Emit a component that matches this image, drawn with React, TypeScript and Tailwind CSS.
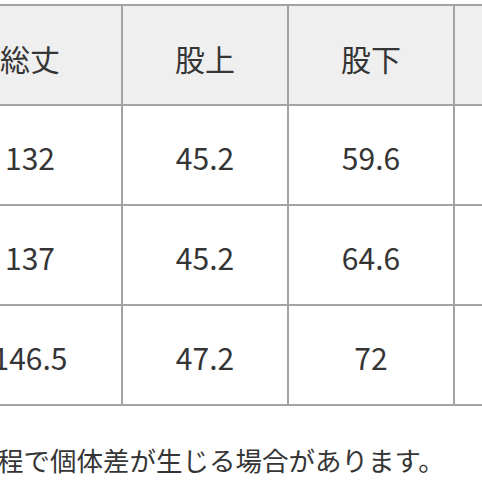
const header = ["総丈", "股上", "股下", ""];
const rows = [
  ["132", "45.2", "59.6", ""],
  ["137", "45.2", "64.6", ""],
  ["146.5", "47.2", "72", ""],
];

const colWidths = ["w-[184px]", "w-[166px]", "w-[166px]", "w-[166px]"];

function Cell({ text, i, head }: { text: string; i: number; head?: boolean }) {
  return (
    <div
      className={`${colWidths[i]} box-border flex h-[100px] shrink-0 items-center justify-center border-r-2 border-b-2 border-[#a3a3a3] ${
        head ? "bg-[#efefef] pt-[5px]" : "bg-white pt-[4px]"
      }`}
    >
      {text}
    </div>
  );
}

export default function App() {
  return (
    <div
      className="h-[482px] w-[482px] overflow-hidden bg-white text-[#353535]"
      style={{ fontFamily: '"Noto Sans CJK JP", "Noto Sans", sans-serif' }}
    >
      <div className="ml-[-61px] mt-[4px] w-max border-t-2 border-[#a3a3a3] text-[30px] leading-none">
        <div className="flex">
          {header.map((h, i) => (
            <Cell key={i} text={h} i={i} head />
          ))}
        </div>
        {rows.map((r, ri) => (
          <div key={ri} className="flex">
            {r.map((c, i) => (
              <Cell key={i} text={c} i={i} />
            ))}
          </div>
        ))}
      </div>
      <p className="ml-[-29.5px] mt-[41px] whitespace-nowrap text-[26.5px] leading-none">
        工程で個体差が生じる場合があります。
      </p>
    </div>
  );
}
